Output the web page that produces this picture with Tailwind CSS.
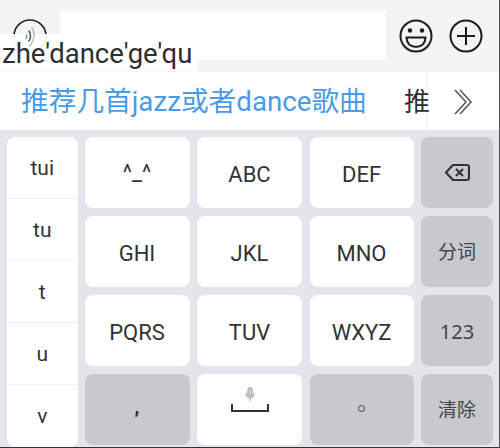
<!DOCTYPE html>
<html lang="en">
<head>
    <meta charset="UTF-8">
    <title>Keyboard</title>
    <script src="https://cdn.jsdelivr.net/npm/@tailwindcss/browser@4"></script>
</head>
<body class="w-[500px] h-[448px] overflow-hidden bg-[#e4e5ea] font-['Roboto','Noto_Sans_CJK_SC',sans-serif] text-[#333]">

    <div class="relative w-[500px] h-[448px] flex flex-col">
        <!-- Input bar -->
        <div class="h-[72px] shrink-0 bg-[#f4f4f4] flex pt-[11px] pl-[13px]">
            <svg class="w-[34px] h-[34px] mt-[8px]" viewBox="0 0 34 34" fill="none">
                <circle cx="17" cy="17" r="16" stroke="#222" stroke-width="1.6"/>
            </svg>
            <div class="w-[326px] h-[49px] ml-[13px] bg-white"></div>
            <svg class="w-[34px] h-[34px] ml-[13px] mt-[8px]" viewBox="0 0 34 34" fill="none" stroke="#1c1c1c" stroke-width="2">
                <circle cx="17" cy="17" r="15.500"/>
                <path d="M7.500 18.500h19q-.5 9-9.500 9.500q-9-.5-9.500-9.500z"/>
                <circle cx="11" cy="11.500" r="2.200" fill="#1c1c1c" stroke="none"/>
                <circle cx="23" cy="11.500" r="2.200" fill="#1c1c1c" stroke="none"/>
            </svg>
            <svg class="w-[34px] h-[34px] ml-[16px] mt-[8px]" viewBox="0 0 34 34" fill="none" stroke="#1c1c1c" stroke-width="2">
                <circle cx="17" cy="17" r="15.500"/>
                <path d="M17 8v18M8 17h18"/>
            </svg>
        </div>

        <!-- Pinyin bubble -->
        <div class="absolute left-0 top-[34px] w-[198px] h-[37px] bg-white/95 pl-[2px] text-[27.500px] leading-[40px] text-[#2e2e2e] whitespace-nowrap">zhe'dance'ge'qu</div>

        <!-- Voice waves sit over the bubble -->
        <svg class="absolute left-[22px] top-[26px] w-[16px] h-[22px]" viewBox="0 0 16 22" fill="none" stroke-linecap="round">
            <path d="M4 9q1.500 1.500 0 3.500" stroke="#999" stroke-width="1.500"/>
            <path d="M7 5q3 5 0 10" stroke="#555" stroke-width="1.500"/>
            <path d="M10 2q5 8 -2 18" stroke="#bbb" stroke-width="1.500"/>
        </svg>

        <!-- Candidates -->
        <div class="h-[58px] shrink-0 bg-white flex items-center relative overflow-hidden pt-[2px]">
            <div class="absolute left-[425px] top-0 w-[3px] h-full bg-[#f7f7f7]"></div>
            <span class="relative ml-[21px] w-[383px] text-[27.700px] leading-[56px] text-[#4a9be8] whitespace-nowrap">推荐几首jazz或者dance歌曲</span>
            <span class="relative text-[26px] leading-[56px] text-[#2e2e2e]">推</span>
            <svg class="w-[20px] h-[28px] ml-[23px]" viewBox="0 0 20 28" fill="none" stroke="#555" stroke-width="1.500">
                <path d="M2 2l11 12L2 26M7 2l11 12L7 26"/>
            </svg>
        </div>

        <!-- Keyboard -->
        <div class="flex-1 min-h-0 flex gap-[7px] pt-[7px] pl-[7px] pr-[7px]">
            <div class="w-[71px] h-[310px] bg-white rounded-lg flex flex-col text-[21px] text-center">
                <div class="h-[62px] border-b border-[#f0f0f3] leading-[62px]">tui</div>
                <div class="h-[62px] border-b border-[#f0f0f3] leading-[62px]">tu</div>
                <div class="h-[62px] border-b border-[#f0f0f3] leading-[62px]">t</div>
                <div class="h-[62px] border-b border-[#f0f0f3] leading-[63px]">u</div>
                <div class="h-[62px] leading-[63px]">v</div>
            </div>
            <div class="flex-1 grid grid-cols-[105px_105px_104px_72px] grid-rows-[71px_71px_71px_71px] gap-x-[7.500px] gap-y-[8px] text-[22px]">
                <div class="bg-white rounded-lg flex items-center justify-center">^_^</div>
                <div class="bg-white rounded-lg flex items-center justify-center pt-[3px]">ABC</div>
                <div class="bg-white rounded-lg flex items-center justify-center pt-[3px]">DEF</div>
                <div class="bg-[#c8c9cd] rounded-lg flex items-center justify-center">
                    <svg class="w-[26px] h-[19px]" viewBox="0 0 26 19" fill="none" stroke="#333" stroke-width="2.200">
                        <path d="M9 2h14q2 0 2 2v11q0 2-2 2H9L2 9.500z" stroke-linejoin="round"/>
                        <path d="M12 6l7 7M19 6l-7 7"/>
                    </svg>
                </div>
                <div class="bg-white rounded-lg flex items-center justify-center pt-[3px]">GHI</div>
                <div class="bg-white rounded-lg flex items-center justify-center pt-[3px]">JKL</div>
                <div class="bg-white rounded-lg flex items-center justify-center pt-[3px]">MNO</div>
                <div class="bg-[#c8c9cd] rounded-lg flex items-center justify-center pt-[3px] text-[19px] text-[#444]">分词</div>
                <div class="bg-white rounded-lg flex items-center justify-center pt-[3px]">PQRS</div>
                <div class="bg-white rounded-lg flex items-center justify-center pt-[3px]">TUV</div>
                <div class="bg-white rounded-lg flex items-center justify-center pt-[3px]">WXYZ</div>
                <div class="bg-[#c8c9cd] rounded-lg flex items-center justify-center pt-[3px] text-[20px] text-[#444] font-['Noto_Sans',sans-serif]">123</div>
                <div class="bg-[#c8c9cd] rounded-lg flex items-center justify-center font-bold text-[20px] pb-[8px]">,</div>
                <div class="bg-white rounded-lg flex flex-col items-center pt-[13px]">
                    <svg class="w-[10px] h-[15px]" viewBox="0 0 12 18" fill="none" stroke="#aaa" stroke-width="1.300">
                        <rect x="3.500" y="1" width="5" height="10" rx="2.500" fill="#ccc"/>
                        <path d="M1.500 7q0 6 4.500 6t4.500-6M6 13v4"/>
                    </svg>
                    <svg class="w-[38px] h-[8px] mt-[2px]" viewBox="0 0 38 8" fill="none" stroke="#333" stroke-width="2">
                        <path d="M1 0v7h36V0"/>
                    </svg>
                </div>
                <div class="bg-[#c8c9cd] rounded-lg flex items-center justify-center pb-[2px]">
                    <div class="w-[7px] h-[7px] rounded-full border border-[#444]"></div>
                </div>
                <div class="bg-[#c8c9cd] rounded-lg flex items-center justify-center pt-[3px] text-[19px] text-[#444]">清除</div>
            </div>
        </div>

        <div class="absolute left-0 bottom-0 w-full h-px bg-[#333]"></div>
        <div class="absolute right-0 top-0 w-px h-full bg-[#555]"></div>
    </div>

</body>
</html>
